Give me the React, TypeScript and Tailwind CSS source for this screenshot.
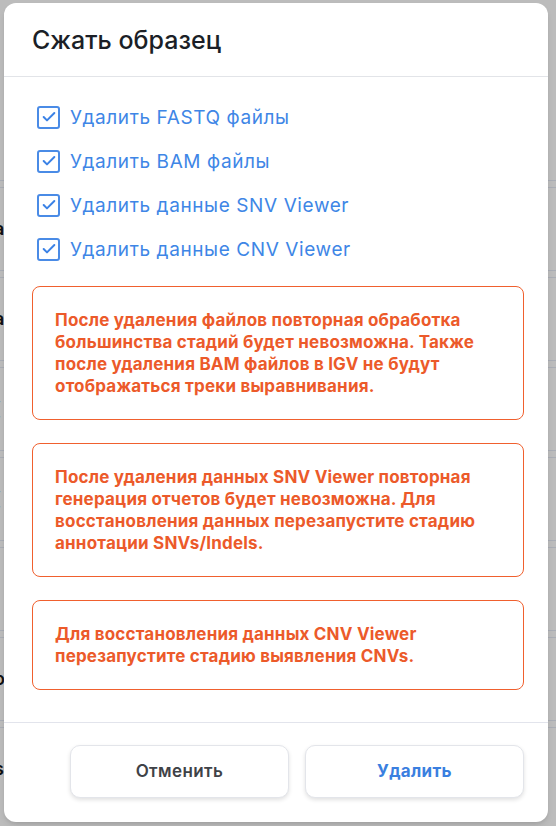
import { Check } from "lucide-react";

const options = [
  "Удалить FASTQ файлы",
  "Удалить BAM файлы",
  "Удалить данные SNV Viewer",
  "Удалить данные CNV Viewer",
];

const warnings = [
  "После удаления файлов повторная обработка большинства стадий будет невозможна. Также после удаления BAM файлов в IGV не будут отображаться треки выравнивания.",
  "После удаления данных SNV Viewer повторная генерация отчетов будет невозможна. Для восстановления данных перезапустите стадию аннотации SNVs/Indels.",
  "Для восстановления данных CNV Viewer перезапустите стадию выявления CNVs.",
];

const bgRows = ["а", "а", "(", "(", "", "о", "s"];

export default function App() {
  return (
    <div
      className="relative h-[826px] w-[556px] overflow-hidden bg-[#bcbcbc]"
      style={{ fontFamily: "Inter, 'Noto Sans', sans-serif" }}
    >
      {/* faded page behind the overlay */}
      <div className="flex flex-col pt-[180px] text-[18px] font-semibold text-[#111]">
        {bgRows.map((c, i) => (
          <div key={i} className="flex h-[90px] flex-col justify-between">
            <div className="h-[8px] border-y border-[#a9adb5]" />
            <div className="-ml-[6px] leading-none">{c}</div>
            <div />
          </div>
        ))}
      </div>

      <div className="absolute left-[4px] top-[3px] flex h-[819px] w-[544px] flex-col rounded-[12px] bg-white shadow-md">
        <div className="flex h-[74px] items-center border-b border-[#e2e4e8] pl-7 pt-[3px]">
          <h2 className="text-[25px] font-medium text-[#1b1f27]">Сжать образец</h2>
        </div>

        <div className="flex flex-1 flex-col pl-7 pr-6 pt-[28px]">
          <div className="flex flex-col gap-[20px] pl-[5px]">
            {options.map((o) => (
              <label key={o} className="flex h-[24px] items-center gap-[10px]">
                <span className="flex h-[23px] w-[23px] items-center justify-center rounded-[3px] border-2 border-[#4a8be6]">
                  <Check size={16} strokeWidth={3} className="text-[#3b82e6]" />
                </span>
                <span className="text-[19px] leading-none tracking-[0.6px] text-[#3e86e6]">{o}</span>
              </label>
            ))}
          </div>

          <div className="mt-[25px] flex flex-col gap-[23px]">
            {warnings.map((w) => (
              <div
                key={w}
                className="rounded-[8px] border border-[#f0602e] px-[22px] py-[22px] text-[17px] font-bold leading-[22px] tracking-[0.2px] text-[#ec5a2a]"
              >
                {w}
              </div>
            ))}
          </div>
        </div>

        <div className="flex h-[100px] items-start justify-end gap-4 border-t border-[#e2e4ec] pr-6 pt-[22px]">
          <button className="h-[53px] w-[219px] rounded-[10px] border border-[#e3e5ea] bg-white text-[17px] font-semibold tracking-[0.4px] text-[#3f4247] shadow-[0_2px_4px_rgba(0,0,0,0.12)]">
            Отменить
          </button>
          <button className="h-[53px] w-[219px] rounded-[10px] border border-[#e3e5ea] bg-white text-[17px] font-bold tracking-[0.3px] text-[#3a7fe0] shadow-[0_2px_4px_rgba(0,0,0,0.12)]">
            Удалить
          </button>
        </div>
      </div>
    </div>
  );
}
